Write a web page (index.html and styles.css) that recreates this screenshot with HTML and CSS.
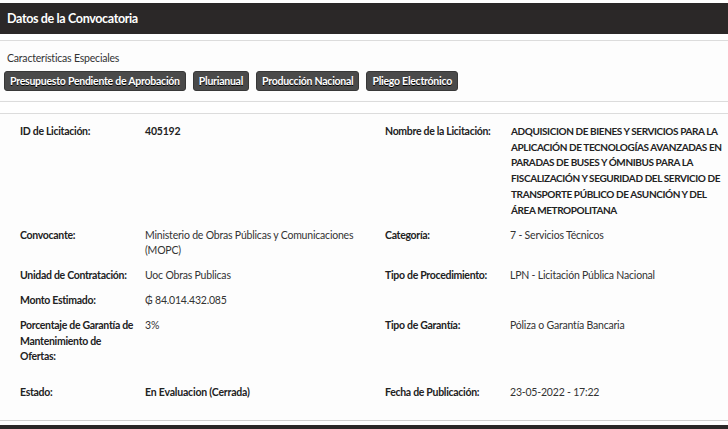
FILE: index.html
```html
<!DOCTYPE html>
<html lang="es">
<head>
<meta charset="utf-8">
<title>Datos de la Convocatoria</title>
<link rel="stylesheet" href="styles.css">
</head>
<body>
<div class="panel-head">
  <h2 class="panel-title">Datos de la Convocatoria</h2>
</div>
<section class="features">
  <p class="features-title">Características Especiales</p>
  <div class="badges">
    <span class="badge">Presupuesto Pendiente de Aprobación</span>
    <span class="badge">Plurianual</span>
    <span class="badge">Producción Nacional</span>
    <span class="badge">Pliego Electrónico</span>
  </div>
</section>
<section class="details">
  <div class="row">
    <div class="half">
      <div class="field"><span class="label">ID de Licitación:</span><span class="value strong">405192</span></div>
    </div>
    <div class="half">
      <div class="field"><span class="label">Nombre de la Licitación:</span><span class="value strong name">ADQUISICION DE BIENES Y SERVICIOS PARA LA APLICACIÓN DE TECNOLOGÍAS AVANZADAS EN PARADAS DE BUSES Y ÓMNIBUS PARA LA FISCALIZACIÓN Y SEGURIDAD DEL SERVICIO DE TRANSPORTE PÚBLICO DE ASUNCIÓN Y DEL ÁREA METROPOLITANA</span></div>
    </div>
  </div>
  <div class="row">
    <div class="half">
      <div class="field"><span class="label">Convocante:</span><span class="value">Ministerio de Obras Públicas y Comunicaciones (MOPC)</span></div>
    </div>
    <div class="half">
      <div class="field"><span class="label">Categoría:</span><span class="value">7 - Servicios Técnicos</span></div>
    </div>
  </div>
  <div class="row">
    <div class="half">
      <div class="field"><span class="label">Unidad de Contratación:</span><span class="value">Uoc Obras Publicas</span></div>
      <div class="field"><span class="label">Monto Estimado:</span><span class="value">₲ 84.014.432.085</span></div>
    </div>
    <div class="half">
      <div class="field"><span class="label">Tipo de Procedimiento:</span><span class="value">LPN - Licitación Pública Nacional</span></div>
    </div>
  </div>
  <div class="row">
    <div class="half">
      <div class="field"><span class="label">Porcentaje de Garantía de Mantenimiento de Ofertas:</span><span class="value">3%</span></div>
    </div>
    <div class="half">
      <div class="field"><span class="label">Tipo de Garantía:</span><span class="value">Póliza o Garantía Bancaria</span></div>
    </div>
  </div>
  <div class="row row-last">
    <div class="half">
      <div class="field"><span class="label">Estado:</span><span class="value strong">En Evaluacion (Cerrada)</span></div>
    </div>
    <div class="half">
      <div class="field"><span class="label">Fecha de Publicación:</span><span class="value">23-05-2022 - 17:22</span></div>
    </div>
  </div>
</section>
<div class="panel-next"></div>
</body>
</html>
```
FILE: styles.css
```css
html, body {
  margin: 0;
  padding: 0;
  background: #ffffff;
}
body {
  font-family: "Lato", "Open Sans", "Liberation Sans", sans-serif;
  font-size: 10.5px;
  line-height: 15.8px;
  letter-spacing: -0.2px;
  color: #333;
  padding-top: 3px;
  overflow: hidden;
  height: 429px;
}
.panel-head {
  background: #2b2828;
  height: 31px;
  display: flex;
  align-items: center;
  padding-left: 7px;
}
.panel-title {
  margin: 0;
  color: #fff;
  font-size: 12.5px;
  font-weight: 700;
  letter-spacing: -0.35px;
}
.features {
  margin-top: 6px;
  border-top: 1px solid #dcdcdc;
  border-bottom: 1px solid #dcdcdc;
  background: #fdfdfd;
  padding: 10px 4px 10px 4px;
}
.features-title {
  margin: 0 0 4px 3px;
  color: #333;
}
.badges {
  display: flex;
  gap: 7px;
}
.badge {
  display: inline-block;
  background: #4a4a4a;
  border: 1px solid #383838;
  border-radius: 3px;
  color: #fff;
  font-weight: 700;
  font-size: 10.5px;
  letter-spacing: -0.25px;
  line-height: 18px;
  padding: 0 5px;
  text-shadow: 0 1px 0 #000;
}
.details {
  margin-top: 11px;
  border-top: 1px solid #dcdcdc;
  border-bottom: 1px solid #d0d0d0;
  background: #fdfdfd;
  padding: 10px 4px 19px 20px;
}
.row {
  display: grid;
  grid-template-columns: 365px 1fr;
  margin-bottom: 9px;
}
.row-last {
  margin-top: 20px;
  margin-bottom: 0;
}
.field {
  display: grid;
  grid-template-columns: 125px 1fr;
}
.half .field + .field {
  margin-top: 9px;
}
.label {
  font-weight: 700;
  color: #222;
  letter-spacing: -0.3px;
  padding-right: 7px;
}
.value {
  color: #333;
}
.value.strong {
  font-weight: 700;
  color: #222;
}
.name {
  padding-left: 1px;
  font-size: 10px;
  letter-spacing: -0.4px;
}
.panel-next {
  margin-top: 4px;
  background: #2b2828;
  height: 10px;
}
```
